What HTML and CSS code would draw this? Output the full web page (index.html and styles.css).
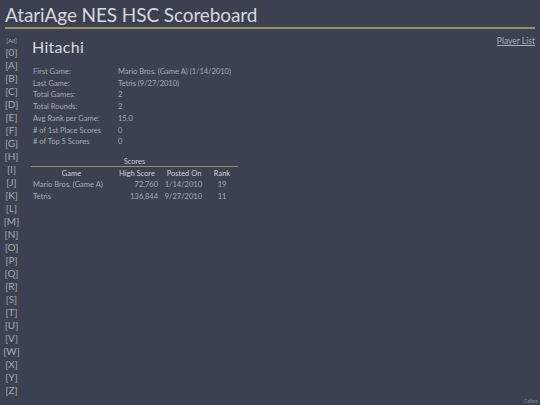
FILE: index.html
```html
<!DOCTYPE html>
<html>
<head>
<meta charset="utf-8">
<link rel="stylesheet" href="styles.css">
</head>
<body>
<h1 class="title">AtariAge NES HSC Scoreboard</h1>
<div class="main">
  <nav class="letters">
    <a class="all">[All]</a>
    <a>[0]</a><a>[A]</a><a>[B]</a><a>[C]</a><a>[D]</a><a>[E]</a><a>[F]</a><a>[G]</a><a>[H]</a><a>[I]</a><a>[J]</a><a>[K]</a><a>[L]</a><a>[M]</a><a>[N]</a><a>[O]</a><a>[P]</a><a>[Q]</a><a>[R]</a><a>[S]</a><a>[T]</a><a>[U]</a><a>[V]</a><a>[W]</a><a>[X]</a><a>[Y]</a><a>[Z]</a>
  </nav>
  <div class="content">
    <div class="top">
      <h2 class="player">Hitachi</h2>
      <a class="plist">Player List</a>
    </div>
    <table class="info">
      <tr><td class="lbl">First Game:</td><td>Mario Bros. (Game A) (1/14/2010)</td></tr>
      <tr><td class="lbl">Last Game:</td><td>Tetris (9/27/2010)</td></tr>
      <tr><td class="lbl">Total Games:</td><td>2</td></tr>
      <tr><td class="lbl">Total Rounds:</td><td>2</td></tr>
      <tr><td class="lbl">Avg Rank per Game:</td><td>15.0</td></tr>
      <tr><td class="lbl"># of 1st Place Scores</td><td>0</td></tr>
      <tr><td class="lbl"># of Top 5 Scores</td><td>0</td></tr>
    </table>
    <table class="scores">
      <caption>Scores</caption>
      <tr class="head"><th class="c-game">Game</th><th class="c-score">High Score</th><th class="c-date">Posted On</th><th class="c-rank">Rank</th></tr>
      <tr><td class="game">Mario Bros. (Game A)</td><td class="num">72,760</td><td class="num">1/14/2010</td><td class="rank">19</td></tr>
      <tr><td class="game">Tetris</td><td class="num">136,844</td><td class="num">9/27/2010</td><td class="rank">11</td></tr>
    </table>
  </div>
</div>
<div class="colors">Colors</div>
</body>
</html>
```
FILE: styles.css
```css
html, body {
  margin: 0;
  padding: 0;
  background: #3b4150;
  height: 405px;
  overflow: hidden;
  font-family: "Lato", "Inter", sans-serif;
  color: #c9ccd3;
}
.title {
  margin: 0 5px;
  padding: 4px 0 1px 0;
  font-size: 19px;
  font-weight: 400;
  line-height: 22px;
  color: #d6d8dd;
  border-bottom: 2px solid #9c9068;
  letter-spacing: -0.1px;
}
.main {
  display: flex;
  padding-top: 6px;
}
.letters {
  width: 23px;
  display: flex;
  flex-direction: column;
  align-items: center;
  font-size: 10px;
  line-height: 13px;
  color: #a6abb6;
}
.letters a { display: block; }
.letters .all {
  font-size: 6px;
  line-height: 11px;
}
.content {
  flex: 1;
  padding-left: 8px;
  padding-right: 5px;
}
.top {
  display: flex;
  justify-content: space-between;
  align-items: flex-start;
}
.player {
  margin: 2px 0 0 1px;
  font-size: 16px;
  font-weight: 400;
  line-height: 20px;
  color: #d8dadf;
  letter-spacing: 0.3px;
}
.plist {
  font-size: 8.5px;
  color: #a9aeb8;
  text-decoration: underline;
  margin-top: 1px;
}
.info {
  margin-top: 9px;
  border-collapse: collapse;
  font-size: 7.5px;
  color: #a7acb6;
}
.info td {
  padding: 0;
  height: 11.7px;
  line-height: 11.7px;
}
.info .lbl { width: 85px; padding-left: 2px; }
.scores {
  margin-top: 9px;
  border-collapse: collapse;
  width: 207px;
  font-size: 7.5px;
}
.scores caption {
  color: #c4c7ce;
  line-height: 9px;
  border-bottom: 1.5px solid #9c9068;
}
.scores th {
  font-weight: 400;
  color: #d0d3d9;
  padding: 1px 0 0 0;
  line-height: 11px;
}
.scores td {
  color: #a7acb6;
  padding: 0;
  line-height: 11.7px;
}
.c-game { width: 81px; }
.c-score { width: 50px; }
.c-date { width: 44px; }
.scores td.game { padding-left: 2px; }
.scores td.num { text-align: right; padding-right: 4px; }
.scores td.rank { text-align: center; }
.colors {
  position: absolute;
  right: 2px;
  bottom: 1px;
  font-size: 5px;
  color: #8d929c;
}
```
